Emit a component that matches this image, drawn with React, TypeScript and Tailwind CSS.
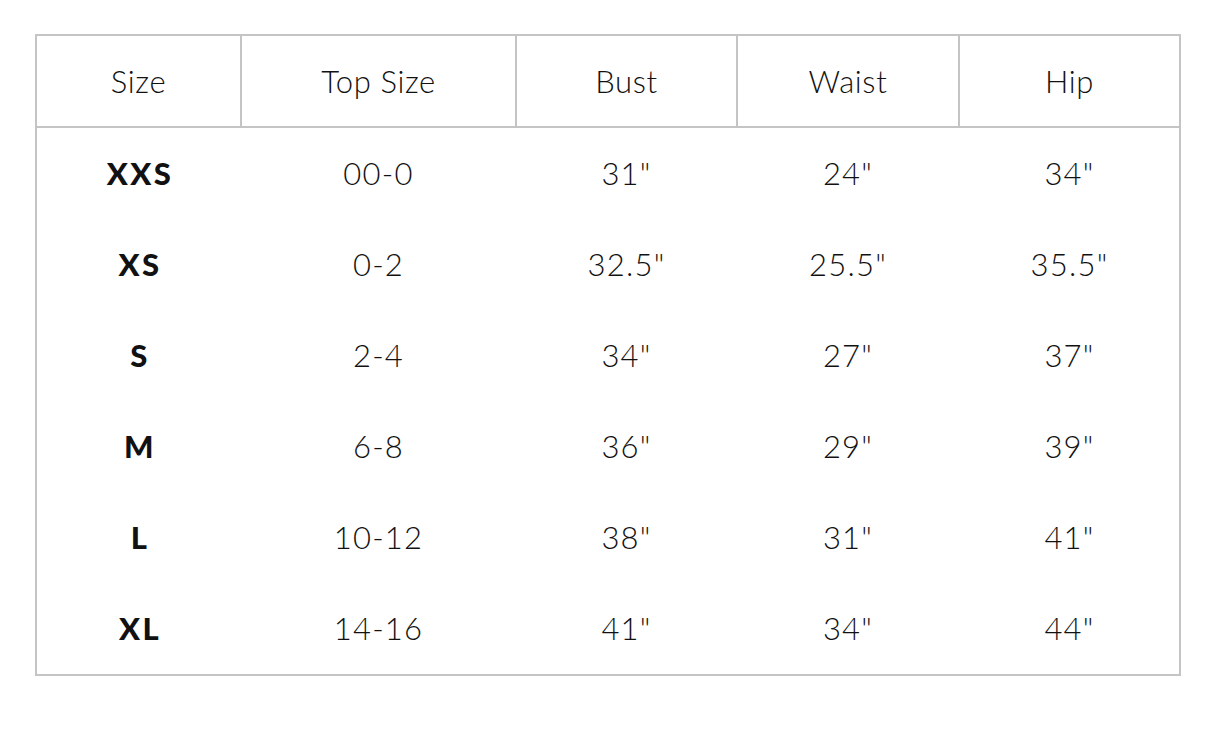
const columns = ['Size', 'Top Size', 'Bust', 'Waist', 'Hip']

const rows = [
  ['XXS', '00-0', '31"', '24"', '34"'],
  ['XS', '0-2', '32.5"', '25.5"', '35.5"'],
  ['S', '2-4', '34"', '27"', '37"'],
  ['M', '6-8', '36"', '29"', '39"'],
  ['L', '10-12', '38"', '31"', '41"'],
  ['XL', '14-16', '41"', '34"', '44"'],
]

const grid = 'grid grid-cols-[205px_275px_221px_222px_219px]'

export default function App() {
  return (
    <div className="min-h-screen bg-white pt-[34px] pl-[35px] text-[#111] font-['Lato','Liberation_Sans',sans-serif]">
      <div className="w-[1146px] border-2 border-[#c4c4c4]">
        {/* Header */}
        <div className={`${grid} h-[92px] border-b-2 border-[#c4c4c4]`}>
          {columns.map((c, i) => (
            <div
              key={c}
              className={`flex items-center justify-center text-[31px] font-light tracking-[0.02em] ${
                i < columns.length - 1 ? 'border-r-2 border-[#c4c4c4]' : ''
              }`}
            >
              {c}
            </div>
          ))}
        </div>

        {/* Body */}
        {rows.map((r) => (
          <div key={r[0]} className={`${grid} h-[91px]`}>
            {r.map((v, i) => (
              <div
                key={i}
                className={`flex items-center justify-center text-[31px] ${
                  i === 0 ? 'font-black tracking-[0.08em] pl-[3px]' : 'font-light tracking-[0.04em]'
                } ${i < columns.length - 1 ? 'pr-[2px]' : ''}`}
              >
                {v}
              </div>
            ))}
          </div>
        ))}
      </div>
    </div>
  )
}
